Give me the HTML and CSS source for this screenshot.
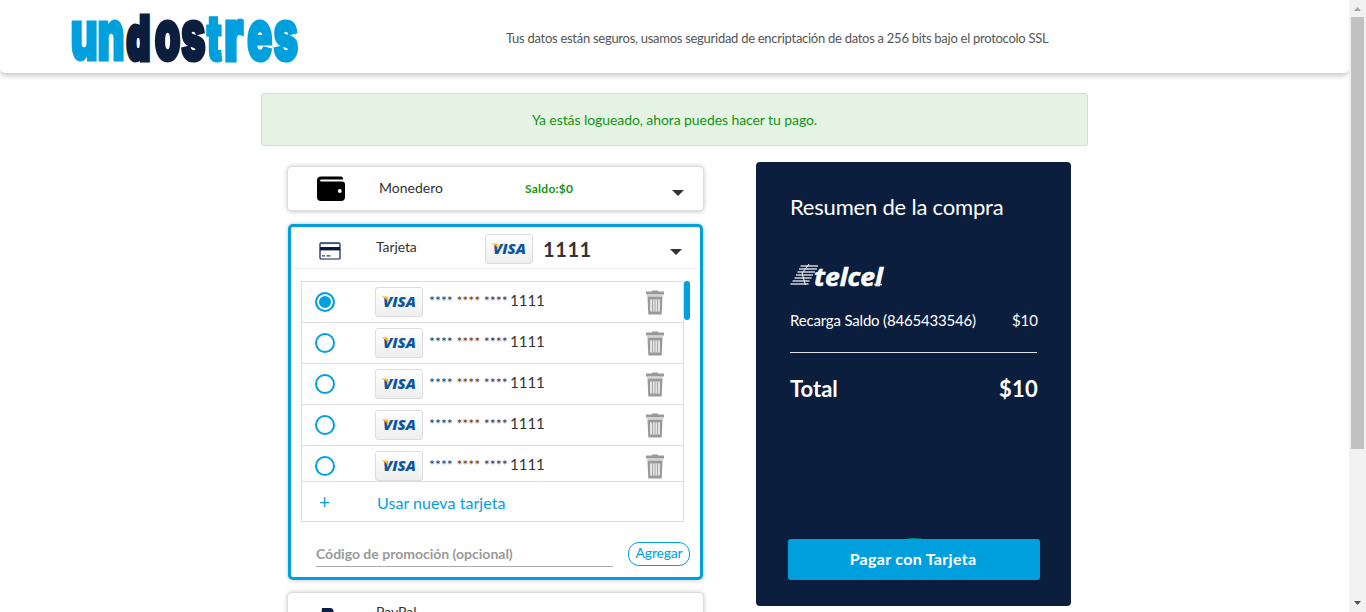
FILE: index.html
```html
<!DOCTYPE html>
<html lang="es">
<head>
<meta charset="utf-8">
<title>undostres</title>
<link rel="stylesheet" href="styles.css">
</head>
<body>
<svg class="defs" width="0" height="0">
  <defs>
    <symbol id="trash" viewBox="0 0 18 25">
      <path d="M6 1.500V0.500h6v1h6v3H0v-3z" fill="#999"/>
      <path d="M1 5.200h16v1H1z" fill="#ccc"/>
      <path d="M1.500 6.500h15l-.8 18H2.300z" fill="#999"/>
      <path d="M4 9.500h10v12H4z" fill="#e2e2e2"/>
      <path d="M6.500 9.500v12M9 9.500v12M11.500 9.500v12" stroke="#aaa" stroke-width="1"/>
    </symbol>
  </defs>
</svg>
<div class="window">
  <div class="page">
    <header class="header">
      <svg class="logo" width="232" height="65" viewBox="0 0 232 65">
        <g transform="scale(.6 1)">
          <text class="cyan" y="53" x="1 46">un</text>
          <text class="navy" y="53" x="94 141 185"><tspan class="tall">d</tspan>os</text>
          <text class="cyan" y="53" x="228 258 295 339"><tspan class="tee">t</tspan><tspan class="arr">r</tspan>es</text>
        </g>
      </svg>
      <p class="secure"><span>Tus datos están seguros, usamos seguridad de encriptación de datos a 256 bits bajo el protocolo SSL</span></p>
    </header>
    <div class="notice">Ya estás logueado, ahora puedes hacer tu pago.</div>
    <main class="columns">
      <section class="methods">
        <div class="box wallet">
          <svg class="wallet-icon" width="28" height="25" viewBox="0 0 28 25"><path d="M4 0.500h20q2 0 2 2v1H4.500q-1.500 0-1.500 1t1.500 1H25q3 0 3 3V21q0 4-4 4H4q-4 0-4-4V4.500q0-4 4-4z"/><circle cx="22.800" cy="15" r="1.900" fill="#fff"/></svg>
          <span class="name">Monedero</span>
          <span class="balance">Saldo:$0</span>
          <i class="caret"></i>
        </div>
        <div class="card-box">
          <div class="card-head">
            <svg class="card-icon" width="22" height="18" viewBox="0 0 22 18"><rect x="1" y="1" width="20" height="16" rx="1" fill="#fff" stroke="#0a1f54" stroke-width="1.200"/><path d="M1 1.200h20" stroke="#465963" stroke-width="1.800"/><path d="M1 6.700h20" stroke="#0a1a3b" stroke-width="3.400"/><path d="M3 13.800h3M7.500 13.800h4" stroke="#333e5e" stroke-width="1.300"/></svg>
            <span class="name">Tarjeta</span>
            <span class="visa"><svg width="36" height="22"><text x="2" y="16" textLength="33" lengthAdjust="spacingAndGlyphs">VISA</text><path d="M0 5.500h6.500l1.500 6Q5 7 0 5.500z" fill="#fbb817"/></svg></span>
            <b class="last4">1111</b>
            <i class="caret"></i>
          </div>
          <div class="list-area">
            <div class="list">
              <div class="row"><i class="radio on"></i><span class="visa"><svg width="36" height="22"><text x="2" y="16" textLength="33" lengthAdjust="spacingAndGlyphs">VISA</text><path d="M0 5.500h6.500l1.500 6Q5 7 0 5.500z" fill="#fbb817"/></svg></span><span class="stars">**** <em>****</em> ****</span><span class="num">1111</span><svg class="trash"><use href="#trash"/></svg></div>
              <div class="row"><i class="radio"></i><span class="visa"><svg width="36" height="22"><text x="2" y="16" textLength="33" lengthAdjust="spacingAndGlyphs">VISA</text><path d="M0 5.500h6.500l1.500 6Q5 7 0 5.500z" fill="#fbb817"/></svg></span><span class="stars">**** <em>****</em> ****</span><span class="num">1111</span><svg class="trash"><use href="#trash"/></svg></div>
              <div class="row"><i class="radio"></i><span class="visa"><svg width="36" height="22"><text x="2" y="16" textLength="33" lengthAdjust="spacingAndGlyphs">VISA</text><path d="M0 5.500h6.500l1.500 6Q5 7 0 5.500z" fill="#fbb817"/></svg></span><span class="stars">**** <em>****</em> ****</span><span class="num">1111</span><svg class="trash"><use href="#trash"/></svg></div>
              <div class="row"><i class="radio"></i><span class="visa"><svg width="36" height="22"><text x="2" y="16" textLength="33" lengthAdjust="spacingAndGlyphs">VISA</text><path d="M0 5.500h6.500l1.500 6Q5 7 0 5.500z" fill="#fbb817"/></svg></span><span class="stars">**** <em>****</em> ****</span><span class="num">1111</span><svg class="trash"><use href="#trash"/></svg></div>
              <div class="row last"><i class="radio"></i><span class="visa"><svg width="36" height="22"><text x="2" y="16" textLength="33" lengthAdjust="spacingAndGlyphs">VISA</text><path d="M0 5.500h6.500l1.500 6Q5 7 0 5.500z" fill="#fbb817"/></svg></span><span class="stars">**** <em>****</em> ****</span><span class="num">1111</span><svg class="trash"><use href="#trash"/></svg></div>
              <div class="new-card"><span class="plus">+</span><span class="use-new">Usar nueva tarjeta</span></div>
            </div>
            <i class="list-thumb"></i>
          </div>
          <div class="promo">
            <span class="promo-input">Código de promoción (opcional)</span>
            <span class="add">Agregar</span>
          </div>
        </div>
        <div class="box paypal">
          <svg class="pp" width="20" height="22" viewBox="0 0 20 22"><path d="M2 0h8q5 0 3 7-1.500 5-8 5l-1.500 7H0z" fill="#0a1f44"/></svg>
          <span class="name">PayPal</span>
        </div>
      </section>
      <aside class="summary">
        <h1 class="title">Resumen de la compra</h1>
        <svg class="telcel" width="98" height="34" viewBox="0 0 98 34">
          <path d="M11.500 7H29M10 10h18M8.500 13H26M7 16h17M5.500 19h17M3.500 22h17M1.500 25h18" stroke="#cfd4dc" stroke-width="1.700"/>
          <path d="M20 5L14 13q-1 1-.5 3l3 10" fill="none" stroke="#fff" stroke-width="1"/>
          <text class="telcel-name" x="25" y="27" textLength="69" lengthAdjust="spacingAndGlyphs">telcel</text>
          <path d="M85 25.500h2M88 25.500h5" stroke="#cbd2dc" stroke-width="1.500" stroke-dasharray="2 1"/>
        </svg>
        <div class="line item"><span class="concept">Recarga Saldo (8465433546)</span><span>$10</span></div>
        <div class="line total"><span>Total</span><span>$10</span></div>
        <div class="pay">Pagar con Tarjeta</div>
      </aside>
    </main>
  </div>
  <div class="scrollbar">
    <svg width="17" height="17"><path d="M5 11h7l-3.500-4z" fill="#a3a3a3"/></svg>
    <i class="thumb"></i>
    <svg width="17" height="17"><path d="M5 6h7l-3.500 4z" fill="#505050"/></svg>
  </div>
</div>
</body>
</html>
```
FILE: styles.css
```css
* { box-sizing: border-box; }
body { margin: 0; font-family: Lato, sans-serif; color: #333; background: #fff; overflow: hidden; }
.defs { display: none; }
.window { display: flex; height: 612px; overflow: hidden; }
.page { width: 1349px; height: 612px; overflow: hidden; }
.header { height: 73px; display: flex; border-radius: 0 0 5px 5px; box-shadow: 0 3px 5px rgba(0,0,0,.2); }
.logo { margin: 7px 0 0 70px; flex: none; overflow: visible; }
.logo text { font-family: Inter, sans-serif; font-weight: 900; font-size: 70px; stroke-width: 3px; }
.logo .tall { font-size: 61px; stroke-width: 5px; }
.logo .tee { font-size: 63px; stroke-width: 3px; }
.logo .arr { stroke-width: 5px; }
.cyan { fill: #00a0df; stroke: #00a0df; }
.navy { fill: #0b1e3e; stroke: #0b1e3e; }
.secure { margin: 29px 0 0 204px; font-size: 13px; line-height: 18px; letter-spacing: -.274px; white-space: nowrap; color: #555; }
.notice { width: 827px; height: 53px; margin: 20px 0 0 261px; border: 1px solid #c9e6cb; border-radius: 3px; background: #e5f3e5; color: #149414; font-size: 14px; letter-spacing: -.08px; line-height: 52px; text-align: center; }
.columns { display: flex; align-items: flex-start; gap: 52px; padding: 16px 0 0 287px; }
.methods { width: 417px; padding-top: 4px; flex: none; }
.box { display: flex; border-radius: 5px; background: #fff; border: 1px solid #ddd; box-shadow: 0 0 4px rgba(0,0,0,.22); }
.name { font-size: 14px; line-height: 18px; }
.caret { width: 0; height: 0; border: 6px solid transparent; border-top-color: #333; border-bottom: 0; }
.wallet { height: 46px; border-bottom: 2px solid #e0e0e0; }
.wallet-icon { margin: 9px 0 0 29px; }
.wallet .name { margin: 12px 0 0 34px; width: 146px; }
.balance { margin-top: 13px; width: 147px; font-size: 12px; font-weight: 700; letter-spacing: .25px; line-height: 18px; color: #149414; }
.wallet .caret { margin-top: 23px; }
.card-box { margin: 12px 0 0 1px; width: 415px; height: 356px; border: 3px solid #00a0df; border-radius: 5px; background: #fff; box-shadow: 0 0 4px rgba(0,0,0,.25); }
.card-head { display: flex; height: 42px; border-bottom: 1px solid #eee; border-radius: 4px; }
.card-icon { margin: 15px 0 0 28px; }
.card-head .name { margin: 11px 0 0 35px; width: 109px; letter-spacing: -.1px; }
.visa { display: flex; justify-content: center; align-items: center; flex: none; width: 48px; height: 30px; border: 1px solid #ddd; border-radius: 3px; background: linear-gradient(#fff, #eee); }
.visa text { font-family: "Open Sans", sans-serif; font-size: 14px; font-weight: 800; font-style: italic; fill: #0d55a0; }
.card-head .visa { margin-top: 7px; }
.last4 { margin: 9px 0 0 10px; width: 127px; font-size: 20px; line-height: 26px; letter-spacing: .6px; }
.card-head .caret { margin-top: 22px; }
.list-area { display: flex; margin: 12px 0 0 10px; }
.list { width: 383px; height: 241px; border: 1px solid #ddd; }
.row { display: flex; height: 41px; border-bottom: 1px solid #ddd; }
.row.last { height: 36px; }
.radio { width: 20px; height: 20px; margin: 10px 40px 0 13px; flex: none; border: 2px solid #00a0df; border-radius: 50%; }
.radio.on { background: #00a0df; box-shadow: inset 0 0 0 2px #fff; }
.row .visa { margin-top: 5px; }
.stars { margin: 9px 0 0 6px; width: 81px; font-size: 14px; line-height: 20px; color: #1c3a60; white-space: nowrap; }
.stars em { font-style: normal; color: #703030; }
.num { margin-top: 8px; width: 136px; font-size: 15px; line-height: 20px; }
.trash { width: 18px; height: 25px; margin-top: 8px; flex: none; }
.new-card { display: flex; color: #00a0df; line-height: 22px; }
.plus { width: 58px; margin: 9px 0 0 17px; font-size: 19px; }
.use-new { margin-top: 10px; font-size: 16px; letter-spacing: .05px; white-space: nowrap; }
.list-thumb { width: 6px; height: 39px; border-radius: 3px; background: #00a0df; }
.promo { display: flex; margin: 20px 0 0 25px; }
.promo-input { width: 297px; height: 25px; border-bottom: 1px solid #aaa; font-size: 14px; font-weight: 700; line-height: 24px; color: #999; }
.add { width: 62px; height: 24px; margin-left: 15px; border: 1px solid #00a0df; border-radius: 11px; color: #00a0df; font-size: 14px; letter-spacing: -.2px; line-height: 20px; text-align: center; }
.paypal { margin-top: 12px; height: 45px; }
.pp { margin: 15px 0 0 32px; }
.paypal .name { margin: 10px 0 0 36px; }
.summary { width: 315px; height: 444px; padding: 31px 31px 0 32px; background: #0b1e3e; color: #fff; border-radius: 4px; }
.title { margin: 0 0 0 2px; font-size: 22px; font-weight: 400; line-height: 28px; letter-spacing: -.2px; white-space: nowrap; }
.telcel { display: block; margin: 38px 0 0 1px; overflow: visible; }
.telcel-name { font-family: "Open Sans", sans-serif; font-size: 25px; font-weight: 700; font-style: italic; fill: #fff; stroke: #fff; stroke-width: .6px; }
.line { display: flex; justify-content: space-between; margin: 0 3px 0 2px; white-space: nowrap; }
.item { height: 60px; padding-top: 17px; font-size: 15px; line-height: 20px; border-bottom: 1px solid #dde1e7; }
.concept { letter-spacing: -.18px; }
.item span + span { margin-right: -1px; }
.total span + span { margin-right: -1px; letter-spacing: .2px; }
.total { padding-top: 22px; font-size: 22px; font-weight: 700; line-height: 28px; }
.pay { position: relative; height: 41px; margin-top: 136px; padding-right: 2px; border-radius: 3px; background: #00a0df; font-size: 16px; font-weight: 700; letter-spacing: .3px; line-height: 40px; text-align: center; }
.pay::before { content: ""; position: absolute; left: 119px; top: -1px; width: 14px; height: 1px; border-radius: 50% 50% 0 0; background: #078078; }
.scrollbar { width: 17px; height: 612px; flex: none; display: flex; flex-direction: column; align-items: center; background: #f1f1f1; }
.scrollbar svg { display: block; flex: none; }
.thumb { width: 13px; height: 432px; margin-bottom: 146px; background: #c1c1c1; }
```
